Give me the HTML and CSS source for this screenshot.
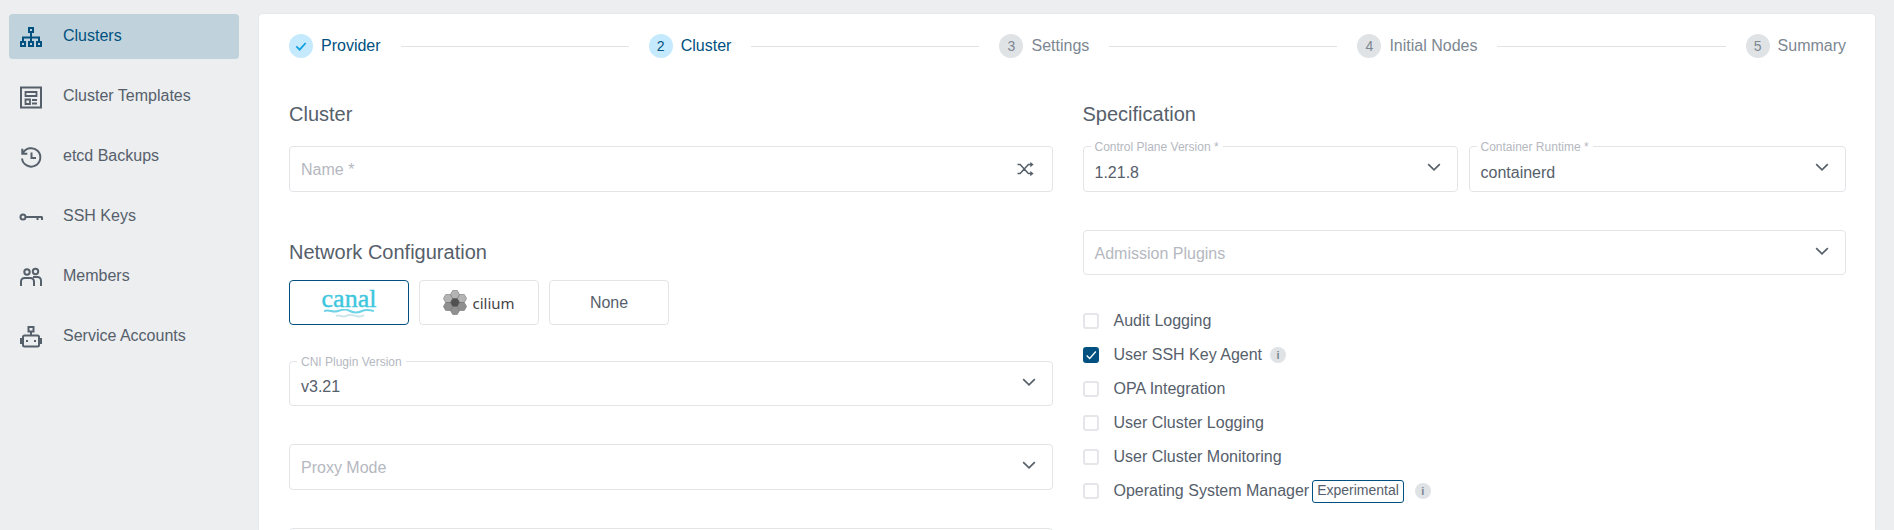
FILE: index.html
```html
<!DOCTYPE html>
<html lang="en">
<head>
    <meta charset="UTF-8">
    <meta name="viewport" content="width=device-width, initial-scale=1.0">
    <title>Create Cluster</title>
    <link rel="stylesheet" href="styles.css">
</head>
<body>
<div class="app">
    <nav class="sidebar">
        <a class="nav-item active">
            <svg class="nav-icon" viewBox="0 0 24 24"><path d="M10 3h4v4h-4zM2 17h4v4h-4zM10 17h4v4h-4zM18 17h4v4h-4zM12 7v10M4 17v-4.500h16v4.500"/></svg>
            <span>Clusters</span>
        </a>
        <a class="nav-item">
            <svg class="nav-icon" viewBox="0 0 24 24"><path d="M2 2.500h20v20h-20z"/><path class="thin" d="M6.500 7h11v4h-11zM6.500 14.500h4.500v4.500h-4.500zM13 15h5M13 18.500h5"/></svg>
            <span>Cluster Templates</span>
        </a>
        <a class="nav-item">
            <svg class="nav-icon" viewBox="0 0 24 24"><path d="M3.800 8.500A9.200 9.200 0 1 1 3 13.500M3.300 3.800v5h5M12.500 7.500v5.500h4.500"/></svg>
            <span>etcd Backups</span>
        </a>
        <a class="nav-item">
            <svg class="nav-icon" viewBox="0 0 24 24"><circle cx="4" cy="12" r="2.500"/><path d="M6.500 12h17M18.500 12v3M23 12v3"/></svg>
            <span>SSH Keys</span>
        </a>
        <a class="nav-item">
            <svg class="nav-icon" viewBox="0 0 24 24"><circle cx="8" cy="7" r="2.700"/><circle cx="16.500" cy="6.500" r="2.700"/><path d="M2 21v-4.500a3.500 3.500 0 0 1 3.500-3.500h6a3.500 3.500 0 0 1 3.500 3.500v4.500M14 12h4.500a3.500 3.500 0 0 1 3.500 3.500v5.500"/></svg>
            <span>Members</span>
        </a>
        <a class="nav-item">
            <svg class="nav-icon" viewBox="0 0 24 24"><path d="M9.500 2h5v4.500h-5zM12 6.500v4M5.500 10.500h13a1.500 1.500 0 0 1 1.500 1.500v8a1.500 1.500 0 0 1-1.500 1.500h-13a1.500 1.500 0 0 1-1.500-1.500v-8a1.500 1.500 0 0 1 1.500-1.500zM4 14h-2v4h2M20 14h2v4h-2M8 15v2M16 15v2"/></svg>
            <span>Service Accounts</span>
        </a>
    </nav>

    <main class="card">
        <div class="stepper">
            <div class="step done">
                <span class="step-num"><svg class="step-check" viewBox="0 0 24 24"><path d="M5 12.500l5 5 9-10"/></svg></span>
                <span>Provider</span>
            </div>
            <div class="step-line"></div>
            <div class="step current"><span class="step-num">2</span><span>Cluster</span></div>
            <div class="step-line"></div>
            <div class="step"><span class="step-num">3</span><span>Settings</span></div>
            <div class="step-line"></div>
            <div class="step"><span class="step-num">4</span><span>Initial Nodes</span></div>
            <div class="step-line"></div>
            <div class="step"><span class="step-num">5</span><span>Summary</span></div>
        </div>

        <div class="form-grid">
            <section class="col">
                <h2>Cluster</h2>
                <div class="field tall">
                    <span class="placeholder">Name *</span>
                    <svg class="field-icon" viewBox="0 0 24 24"><path d="M2 6h3.500l11 12H20M2 18h3.500l11-12H20"/><path class="arrow" d="M19 2.500l4.500 3.500-4.500 3.500zM19 14.500l4.500 3.500-4.500 3.500z"/></svg>
                </div>

                <h2 class="section-gap">Network Configuration</h2>
                <div class="cni-row">
                    <div class="cni-btn selected">
                        <div class="canal-logo">
                            <span class="canal-text">canal</span>
                            <svg class="canal-waves" viewBox="0 0 50 10"><path class="wave-a" d="M0 2c6-2 8 2 14 0s8-2 12 0 8 2 12 0 8-1 12 0"/><path class="wave-b" d="M12 7c4-2 6 2 10 0s6-1 10 0 6 1 8-1"/></svg>
                        </div>
                    </div>
                    <div class="cni-btn">
                        <svg class="cilium-icon" viewBox="0 0 24 24">
                            <defs><polygon id="hex" points="-4.600,0 -2.300,-4 2.300,-4 4.600,0 2.300,4 -2.300,4"/></defs>
                            <use href="#hex" class="hex-light" x="12" y="4"/>
                            <use href="#hex" class="hex-light" x="5" y="8"/>
                            <use href="#hex" class="hex-light" x="19" y="8"/>
                            <use href="#hex" class="hex-mid" x="5" y="16"/>
                            <use href="#hex" class="hex-mid" x="19" y="16"/>
                            <use href="#hex" class="hex-mid" x="12" y="20"/>
                            <use href="#hex" class="hex-dark" x="12" y="12"/>
                        </svg>
                        <span class="cilium-text">cilium</span>
                    </div>
                    <div class="cni-btn">None</div>
                </div>

                <div class="field short cni-version">
                    <label class="field-label">CNI Plugin Version</label>
                    <span class="value">v3.21</span>
                    <svg class="chevron" viewBox="0 0 24 24"><path d="M5 8.500l7 7 7-7"/></svg>
                </div>
                <div class="field tall spaced">
                    <span class="placeholder">Proxy Mode</span>
                    <svg class="chevron" viewBox="0 0 24 24"><path d="M5 8.500l7 7 7-7"/></svg>
                </div>
                <div class="field tall spaced"></div>
            </section>

            <section class="col">
                <h2>Specification</h2>
                <div class="field-row">
                    <div class="field tall">
                        <label class="field-label">Control Plane Version *</label>
                        <span class="value">1.21.8</span>
                        <svg class="chevron" viewBox="0 0 24 24"><path d="M5 8.500l7 7 7-7"/></svg>
                    </div>
                    <div class="field tall">
                        <label class="field-label">Container Runtime *</label>
                        <span class="value">containerd</span>
                        <svg class="chevron" viewBox="0 0 24 24"><path d="M5 8.500l7 7 7-7"/></svg>
                    </div>
                </div>
                <div class="field short spaced">
                    <span class="placeholder">Admission Plugins</span>
                    <svg class="chevron" viewBox="0 0 24 24"><path d="M5 8.500l7 7 7-7"/></svg>
                </div>

                <ul class="checks">
                    <li><span class="box"></span><span>Audit Logging</span></li>
                    <li>
                        <span class="box checked"><svg viewBox="0 0 16 16"><path d="M3 8.500l3.500 3.500 7-8"/></svg></span>
                        <span>User SSH Key Agent</span><span class="info">i</span>
                    </li>
                    <li><span class="box"></span><span>OPA Integration</span></li>
                    <li><span class="box"></span><span>User Cluster Logging</span></li>
                    <li><span class="box"></span><span>User Cluster Monitoring</span></li>
                    <li>
                        <span class="box"></span>
                        <span>Operating System Manager</span><span class="badge">Experimental</span><span class="info">i</span>
                    </li>
                </ul>
            </section>
        </div>
    </main>
</div>
</body>
</html>
```

FILE: styles.css
```css
* {
    box-sizing: border-box;
}

html, body {
    height: 530px;
    margin: 0;
    overflow: hidden;
}

body {
    font-family: "Liberation Sans", Arial, sans-serif;
    font-size: 16px;
    color: #56606b;
    background-color: #eceef0;
}

.app {
    display: flex;
    height: 530px;
}

/* sidebar */
.sidebar {
    width: 259px;
    flex-shrink: 0;
    padding: 14px 20px 0 9px;
}

.nav-item {
    display: flex;
    align-items: center;
    gap: 20px;
    height: 45px;
    margin-bottom: 15px;
    padding-left: 10px;
    border-radius: 4px;
}

.nav-item span {
    padding-bottom: 1px;
}

.nav-item.active {
    background-color: #c0d3dc;
    color: #005180;
}

.nav-icon {
    width: 24px;
    height: 24px;
    fill: none;
    stroke: currentColor;
    stroke-width: 2;
}

.nav-icon .thin {
    stroke-width: 1.800;
}

/* main card */
.card {
    flex: 1;
    margin: 14px 19px 0 0;
    padding: 20px 29px 0 30px;
    background-color: #fff;
    border-radius: 4px 4px 0 0;
    box-shadow: 0 0 2px rgba(0, 0, 0, 0.08);
    overflow: hidden;
}

/* stepper */
.stepper {
    display: flex;
    align-items: center;
    height: 24px;
}

.step {
    display: flex;
    align-items: center;
    gap: 8px;
    color: #7c8792;
}

.step.done, .step.current {
    color: #005180;
}

.step-num {
    display: flex;
    align-items: center;
    justify-content: center;
    width: 24px;
    height: 24px;
    border-radius: 50%;
    font-size: 14px;
    background-color: #e0e3e6;
}

.done .step-num, .current .step-num {
    background-color: #c5e9fd;
}

.step-check {
    width: 16px;
    height: 16px;
    fill: none;
    stroke: #0d9fe0;
    stroke-width: 2.500;
}

.step-line {
    flex: 1;
    height: 1px;
    margin: 1px 20px 0;
    background-color: #e0e2e5;
}

/* form */
.form-grid {
    display: grid;
    grid-template-columns: 1fr 1fr;
    column-gap: 30px;
    padding-top: 44px;
}

h2 {
    margin: 0 0 20px;
    height: 24px;
    font-size: 20px;
    font-weight: normal;
    line-height: 24px;
}

h2.section-gap {
    margin: 48px 0 16px;
}

.field {
    position: relative;
    display: flex;
    align-items: center;
    padding: 0 11px;
    border: 1px solid #e2e4e7;
    border-radius: 4px;
    background-color: #fff;
}

.field.tall {
    height: 46px;
}

.field.short {
    height: 45px;
}

.field.spaced {
    margin-top: 38px;
}

.cni-version {
    margin-top: 36px;
}

.field-row {
    display: grid;
    grid-template-columns: 375px 1fr;
    column-gap: 11px;
}

.field-label {
    position: absolute;
    top: -7px;
    left: 7px;
    padding: 0 4px;
    font-size: 12px;
    line-height: 14px;
    color: #b5b8bf;
    background-color: #fff;
}

.value {
    padding-top: 8px;
}

.cni-version .value {
    padding-top: 6px;
}

.placeholder {
    padding-top: 2px;
    color: #b5b8bf;
}

.chevron, .field-icon {
    position: absolute;
    right: 13px;
    top: 50%;
    width: 20px;
    height: 20px;
    margin-top: -12px;
    fill: none;
    stroke: #56606b;
    stroke-width: 2;
}

.field-icon {
    width: 18px;
    height: 18px;
    margin-top: -9px;
    right: 18px;
}

.field-icon .arrow {
    fill: #56606b;
    stroke: none;
}

/* cni buttons */
.cni-row {
    display: flex;
    gap: 10px;
}

.cni-btn {
    display: flex;
    align-items: center;
    justify-content: center;
    width: 120px;
    height: 45px;
    border: 1px solid #e2e4e7;
    border-radius: 4px;
}

.cni-btn.selected {
    border-color: #005180;
}

.canal-logo {
    display: flex;
    flex-direction: column;
    align-items: center;
    width: 50px;
    padding-top: 2px;
}

.canal-text {
    font-family: "Liberation Serif", serif;
    font-size: 26px;
    line-height: 20px;
    color: #3ec6de;
    -webkit-text-stroke: 0.4px #3ec6de;
}

.canal-waves {
    width: 50px;
    height: 10px;
    fill: none;
    stroke-width: 2;
}

.wave-a {
    stroke: #6fd3e8;
}

.wave-b {
    stroke: #cfe6ec;
}

.cilium-icon {
    width: 24px;
    height: 25px;
    margin-right: 5px;
    stroke: #666;
    stroke-width: 0.500;
}

.hex-light {
    fill: #b4b4b4;
}

.hex-mid {
    fill: #909090;
}

.hex-dark {
    fill: #505050;
}

.cilium-text {
    font-family: "Noto Sans", sans-serif;
    font-size: 15px;
    color: #444;
}

/* checkboxes */
.checks {
    list-style: none;
    margin: 38px 0 0;
    padding: 0;
}

.checks li {
    display: flex;
    align-items: center;
    height: 16px;
    margin-bottom: 18px;
}

.box {
    display: flex;
    width: 16px;
    height: 16px;
    margin-right: 15px;
    border: 2px solid #e4e6e9;
    border-radius: 3px;
}

.box.checked {
    align-items: center;
    justify-content: center;
    background-color: #005180;
    border-color: #005180;
}

.box svg {
    flex-shrink: 0;
    width: 14px;
    height: 14px;
    fill: none;
    stroke: #fff;
    stroke-width: 1.500;
}

.info {
    display: flex;
    align-items: center;
    justify-content: center;
    width: 16px;
    height: 16px;
    margin-left: 8px;
    border-radius: 50%;
    font-size: 11px;
    font-weight: bold;
    color: #7c8792;
    background-color: #e0e3e6;
}

.badge {
    height: 23px;
    margin-left: 3px;
    margin-right: 3px;
    padding: 0 4px;
    border: 1px solid #005180;
    border-radius: 3px;
    font-size: 14px;
    line-height: 18px;
}
```
